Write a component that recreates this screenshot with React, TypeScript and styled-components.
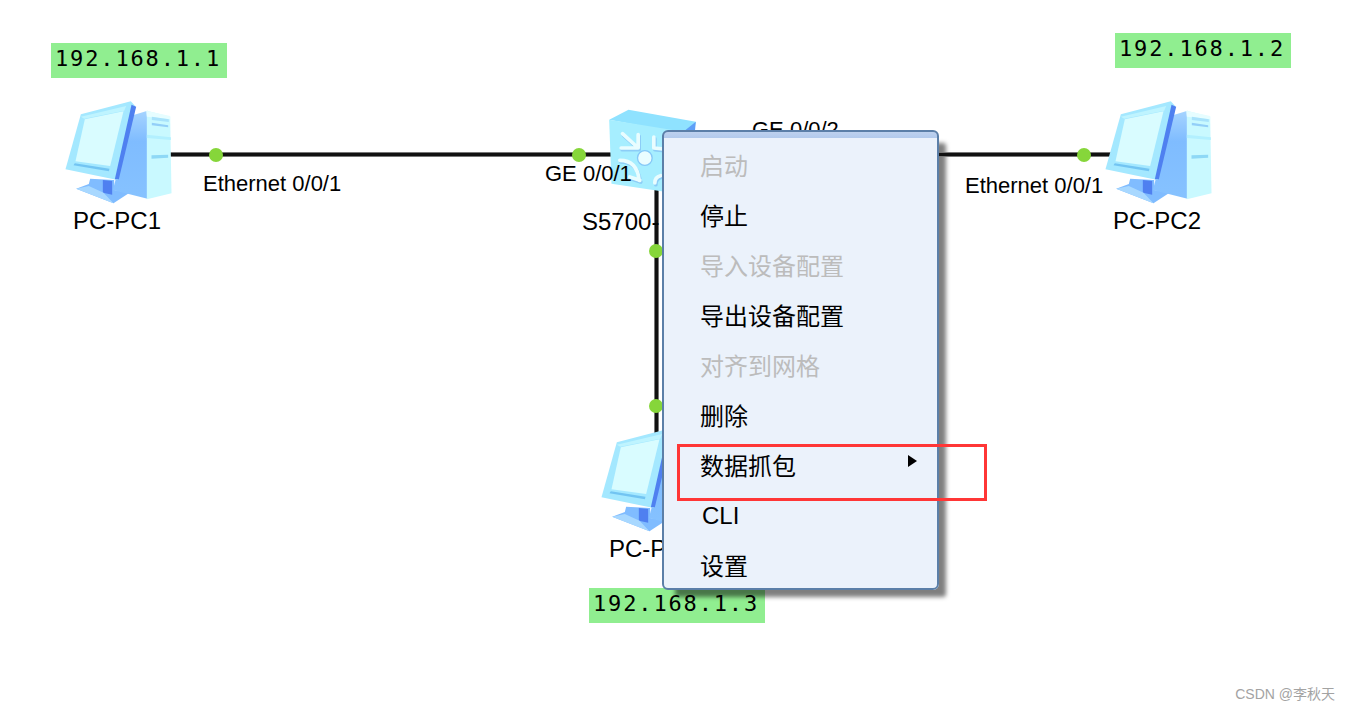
import React from "react";
import styled, { createGlobalStyle } from "styled-components";

const GlobalStyle = createGlobalStyle`
  html, body {
    margin: 0;
    padding: 0;
    background: #fff;
  }
`;

const Canvas = styled.div`
  position: relative;
  width: 1350px;
  height: 711px;
  overflow: hidden;
  background: #fff;
  font-family: "Liberation Sans", Arial, sans-serif;
  color: #000;
`;

const HorizontalLink = styled.div<{ $x: number; $width: number }>`
  position: absolute;
  left: ${({ $x }) => $x}px;
  top: 152px;
  width: ${({ $width }) => $width}px;
  height: 3px;
  background: #111;
  border-top: 1px solid #777;
  border-bottom: 1px solid #777;
`;

const VerticalLink = styled.div`
  position: absolute;
  left: 654px;
  top: 188px;
  width: 3px;
  height: 254px;
  background: #111;
  border-left: 1px solid #777;
  border-right: 1px solid #777;
`;

const PortDot = styled.span<{ $x: number; $y: number }>`
  position: absolute;
  left: ${({ $x }) => $x - 7}px;
  top: ${({ $y }) => $y - 7}px;
  width: 14px;
  height: 14px;
  border-radius: 50%;
  background: #86d63a;
`;

const PortLabel = styled.span<{ $x: number; $y: number }>`
  position: absolute;
  left: ${({ $x }) => $x}px;
  top: ${({ $y }) => $y}px;
  font-size: 22px;
  line-height: 24px;
  white-space: nowrap;
`;

const DeviceNode = styled.div<{ $x: number; $y: number }>`
  position: absolute;
  left: ${({ $x }) => $x}px;
  top: ${({ $y }) => $y}px;
  width: 107px;
  display: flex;
  flex-direction: column;
  align-items: center;
`;

const SwitchNode = styled.div`
  position: absolute;
  left: 582px;
  top: 108px;
  display: flex;
  flex-direction: column;
  align-items: flex-start;
  gap: 13px;
`;

const DeviceName = styled.span`
  margin: 1px 3px 0 0;
  font-size: 24px;
  line-height: 28px;
  white-space: nowrap;
`;

const IpTag = styled.div<{ $x: number; $y: number }>`
  position: absolute;
  left: ${({ $x }) => $x}px;
  top: ${({ $y }) => $y}px;
  width: 176px;
  height: 35px;
  padding-left: 4px;
  box-sizing: border-box;
  background: #90ee90;
  font-family: "DejaVu Sans Mono", "Liberation Mono", monospace;
  font-size: 22px;
  letter-spacing: 1.85px;
  line-height: 32px;
  white-space: nowrap;
`;

const PcSvg = styled.svg`
  display: block;
  flex: none;
`;

const SwitchSvg = styled.svg`
  display: block;
  flex: none;
  margin-left: 26px;
`;

const ContextMenu = styled.ul`
  position: absolute;
  left: 662px;
  top: 130px;
  width: 277px;
  height: 460px;
  box-sizing: border-box;
  margin: 0;
  padding: 8px 0 0;
  list-style: none;
  display: flex;
  flex-direction: column;
  background: linear-gradient(#bdd1ee 0, #b2caec 6px, #ebf2fb 6px);
  border: 2px solid #5b7fa8;
  border-radius: 6px;
  box-shadow: 10px 10px 4px -3px rgba(0, 0, 0, 0.5);
  font-family: "Liberation Sans", "Noto Sans CJK SC", sans-serif;
`;

const MenuItem = styled.li<{ $disabled?: boolean; $latin?: boolean }>`
  height: 49.9px;
  flex: none;
  box-sizing: border-box;
  display: flex;
  align-items: center;
  justify-content: space-between;
  padding: ${({ $latin }) => ($latin ? "4px 20px 0 38px" : "0 20px 0 36px")};
  font-size: 24px;
  color: ${({ $disabled }) => ($disabled ? "#bcbcbc" : "#000")};
`;

const SubmenuArrow = styled.i`
  width: 0;
  height: 0;
  margin-bottom: 6px;
  border-left: 9px solid #000;
  border-top: 6.5px solid transparent;
  border-bottom: 6.5px solid transparent;
`;

const Highlight = styled.div`
  position: absolute;
  left: 677px;
  top: 444px;
  width: 310px;
  height: 57px;
  box-sizing: border-box;
  border: 3px solid #ff3636;
`;

const Watermark = styled.span`
  position: absolute;
  right: 15px;
  top: 685px;
  font-family: "Liberation Sans", "Noto Sans CJK SC", sans-serif;
  font-size: 14px;
  line-height: 18px;
  color: #a3a3a3;
`;

function PcIcon({ id }: { id: string }) {
  return (
    <PcSvg width="107" height="105" viewBox="75 215 320 315">
      <defs>
        <linearGradient id={`${id}-side`} x1="0" y1="0" x2="0" y2="1">
          <stop offset="0" stopColor="#a6d4ff" />
          <stop offset="0.35" stopColor="#7fbcff" />
          <stop offset="1" stopColor="#86c2ff" />
        </linearGradient>
      </defs>
      <polygon points="150,448 222,452 222,482 268,490 220,522 108,478 146,464" fill="#80bcff" />
      <polygon points="188,452 216,455 216,496 188,490" fill="#4f80f0" />
      <polygon points="108,478 146,470 190,490 220,522" fill="#a8d8ff" />
      <polygon points="278,258 322,244 322,508 218,482" fill={`url(#${id}-side)`} />
      <polygon points="320,244 390,262 394,492 320,510" fill="#c9f9ff" />
      <polygon points="318,244 390,260 390,270 320,262" fill="#e6fdff" />
      <polygon points="335,262 386,270 386,278 335,272" fill="#a8e2fb" />
      <polygon points="335,280 384,288 384,294 335,288" fill="#93cff8" />
      <polygon points="320,316 392,324 392,332 320,326" fill="#b2f0ff" />
      <polygon points="334,378 384,376 384,385 334,388" fill="#8ed8f6" />
      <polygon points="122,255 272,216 285,230 232,452 76,420" fill="#a4e8ff" />
      <polygon points="134,270 250,246 210,410 106,396" fill="#d9fcff" />
      <polygon points="122,262 258,230 252,244 132,268" fill="#bff4ff" />
      <polygon points="274,226 288,232 236,450 224,450" fill="#4f80f0" />
      <polygon points="104,402 208,418 206,426 100,408" fill="#72c4f2" />
    </PcSvg>
  );
}

function SwitchIcon() {
  const arrows = (
    <>
      <path d="M278,132 L322,172 M325,135 L325,175 L274,175" />
      <path d="M270,212 Q322,212 328,272 M300,262 L330,272" />
      <path d="M372,142 L372,175 L420,180" />
      <path d="M375,280 Q375,262 392,258" />
    </>
  );
  return (
    <SwitchSvg width="89" height="86" viewBox="235 55 266 258">
      <polygon points="238,90 296,60 498,96 490,135 440,128" fill="#8fe2ff" />
      <polygon points="468,120 498,96 492,160 460,170" fill="#5f9ff7" />
      <polygon points="238,90 470,128 430,310 245,282" fill="#a6eeff" />
      <g fill="none" stroke="#8ccdf7" strokeWidth="11" strokeLinecap="round" strokeLinejoin="round" transform="translate(3 5)">
        {arrows}
      </g>
      <g fill="none" stroke="#e9fdff" strokeWidth="11" strokeLinecap="round" strokeLinejoin="round">
        {arrows}
      </g>
      <circle cx="345" cy="205" r="22" fill="#eafdff" stroke="#86c8f7" strokeWidth="4" />
    </SwitchSvg>
  );
}

const MENU_ITEMS: { text: string; disabled?: boolean; submenu?: boolean; latin?: boolean }[] = [
  { text: "启动", disabled: true },
  { text: "停止" },
  { text: "导入设备配置", disabled: true },
  { text: "导出设备配置" },
  { text: "对齐到网格", disabled: true },
  { text: "删除" },
  { text: "数据抓包", submenu: true },
  { text: "CLI", latin: true },
  { text: "设置" },
];

export default function App(): JSX.Element {
  return (
    <Canvas>
      <GlobalStyle />
      <HorizontalLink $x={168} $width={944} />
      <VerticalLink />

      <PortDot $x={216} $y={155} />
      <PortDot $x={579} $y={155} />
      <PortDot $x={1084} $y={155} />
      <PortDot $x={656} $y={251} />
      <PortDot $x={656} $y={406} />

      <DeviceNode $x={65} $y={101}>
        <PcIcon id="pc1" />
        <DeviceName>PC-PC1</DeviceName>
      </DeviceNode>
      <DeviceNode $x={1105} $y={101}>
        <PcIcon id="pc2" />
        <DeviceName>PC-PC2</DeviceName>
      </DeviceNode>
      <DeviceNode $x={601} $y={429}>
        <PcIcon id="pc3" />
        <DeviceName>PC-PC3</DeviceName>
      </DeviceNode>
      <SwitchNode>
        <SwitchIcon />
        <DeviceName>S5700-</DeviceName>
      </SwitchNode>

      <IpTag $x={51} $y={43}>192.168.1.1</IpTag>
      <IpTag $x={1115} $y={33}>192.168.1.2</IpTag>
      <IpTag $x={589} $y={588}>192.168.1.3</IpTag>

      <PortLabel $x={203} $y={172}>Ethernet 0/0/1</PortLabel>
      <PortLabel $x={545} $y={162}>GE 0/0/1</PortLabel>
      <PortLabel $x={752} $y={118}>GE 0/0/2</PortLabel>
      <PortLabel $x={965} $y={174}>Ethernet 0/0/1</PortLabel>

      <ContextMenu>
        {MENU_ITEMS.map((item) => (
          <MenuItem key={item.text} $disabled={item.disabled} $latin={item.latin}>
            {item.text}
            {item.submenu ? <SubmenuArrow /> : null}
          </MenuItem>
        ))}
      </ContextMenu>
      {/* the link runs over the menu's shadow in the reference */}
      <HorizontalLink $x={939} $width={12} />
      <Highlight />

      <Watermark>CSDN @李秋天</Watermark>
    </Canvas>
  );
}
